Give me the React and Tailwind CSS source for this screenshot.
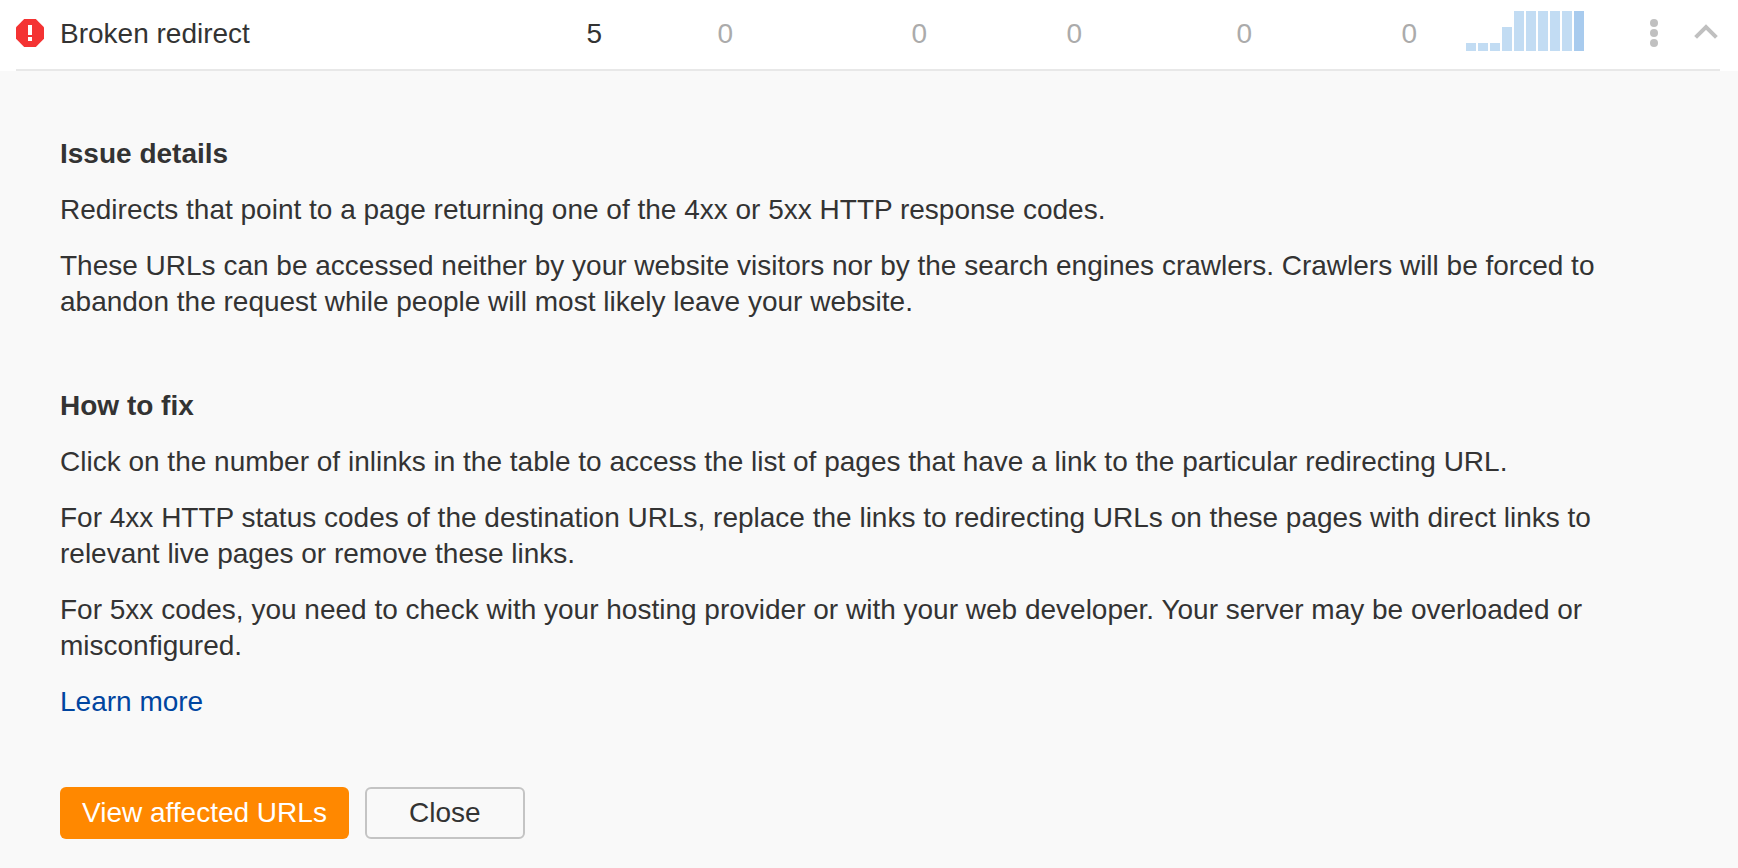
const counts = [
  { label: "Added", value: 0 },
  { label: "New", value: 0 },
  { label: "Removed", value: 0 },
  { label: "Missing", value: 0 },
  { label: "Change", value: 0 },
];

const history = [8, 8, 8, 24, 40, 40, 40, 40, 40, 40];

function ErrorIcon() {
  return (
    <svg width="28" height="28" viewBox="0 0 28 28" className="shrink-0" aria-hidden="true">
      <path d="M8.2 0h11.6L28 8.2v11.6L19.8 28H8.2L0 19.8V8.2z" fill="#f43333" />
      <path d="M12 6h4v10h-4zM12 18h4v4h-4z" fill="#fff" />
    </svg>
  );
}

function Sparkline() {
  return (
    <svg width="118" height="40" viewBox="0 0 118 40" className="ml-auto block" aria-hidden="true">
      {history.map((h, i) => (
        <rect
          key={i}
          x={i * 12}
          y={40 - h}
          width="10"
          height={h}
          fill={i === history.length - 1 ? "#a8cbee" : "#c2dcf3"}
        />
      ))}
    </svg>
  );
}

function IssueRow() {
  return (
    <table className="w-full table-fixed border-collapse">
      <colgroup>
        <col />
        <col className="w-[131px]" />
        <col className="w-[194px]" />
        <col className="w-[155px]" />
        <col className="w-[170px]" />
        <col className="w-[165px]" />
        <col className="w-[167px]" />
        <col className="w-[136px]" />
      </colgroup>
      <tbody>
        <tr className="align-top">
          <th scope="row" className="pt-4 pb-4 text-left font-normal">
            <div className="flex items-start">
              <span className="pt-[3px] pr-4">
                <ErrorIcon />
              </span>
              <span className="grow">Broken redirect</span>
              <span>5</span>
            </div>
          </th>
          {counts.map((c) => (
            <td key={c.label} className="pt-4 text-right text-[#ababab]">
              {c.value}
            </td>
          ))}
          <td className="pt-[11px]">
            <Sparkline />
          </td>
          <td className="pt-[19px]">
            <div className="flex justify-end gap-9">
              <button type="button" aria-label="More actions" className="block">
                <svg width="8" height="28" viewBox="0 0 8 28" fill="#c0c0c0" aria-hidden="true">
                  <circle cx="4" cy="4" r="4" />
                  <circle cx="4" cy="14" r="4" />
                  <circle cx="4" cy="24" r="4" />
                </svg>
              </button>
              <button type="button" aria-label="Collapse" className="block pr-0.5">
                <svg width="24" height="28" viewBox="0 0 24 28" fill="none" stroke="#c0c0c0" strokeWidth="4" aria-hidden="true">
                  <path d="M1.6 18.4 12 8l10.4 10.4" />
                </svg>
              </button>
            </div>
          </td>
        </tr>
      </tbody>
    </table>
  );
}

function Section({ title, children }) {
  return (
    <section className="flex flex-col gap-5">
      <h2 className="font-bold">{title}</h2>
      {children}
    </section>
  );
}

export default function App() {
  return (
    <main className="flex min-h-screen flex-col bg-white font-['Helvetica_Neue','Liberation_Sans',Arial,sans-serif] text-[28px] leading-9 text-[#333]">
      <header className="bg-white pr-[18px] pl-4">
        <div className="border-b-2 border-[#e8e8e8] pb-px">
          <IssueRow />
        </div>
      </header>
      <div className="grow bg-[#f9f9f9] px-[60px] pt-[65px] pb-7">
        <div className="flex flex-col gap-[68px]">
          <Section title="Issue details">
            <p>Redirects that point to a page returning one of the 4xx or 5xx HTTP response codes.</p>
            <p>
              These URLs can be accessed neither by your website visitors nor by the search engines crawlers. Crawlers
              will be forced to abandon the request while people will most likely leave your website.
            </p>
          </Section>
          <Section title="How to fix">
            <p>
              Click on the number of inlinks in the table to access the list of pages that have a link to the particular
              redirecting URL.
            </p>
            <p>
              For 4xx HTTP status codes of the destination URLs, replace the links to redirecting URLs on these pages
              with direct links to relevant live pages or remove these links.
            </p>
            <p>
              For 5xx codes, you need to check with your hosting provider or with your web developer. Your server may be
              overloaded or misconfigured.
            </p>
            <p>
              <a href="#learn-more" className="text-[#0045a0]">
                Learn more
              </a>
            </p>
          </Section>
        </div>
        <div className="mt-[67px] flex gap-4">
          <button type="button" className="h-[52px] rounded-md bg-[#ff8800] px-[22px] text-white">
            View affected URLs
          </button>
          <button type="button" className="h-[52px] w-40 rounded-md border-2 border-[#c4c4c4]">
            Close
          </button>
        </div>
      </div>
    </main>
  );
}
